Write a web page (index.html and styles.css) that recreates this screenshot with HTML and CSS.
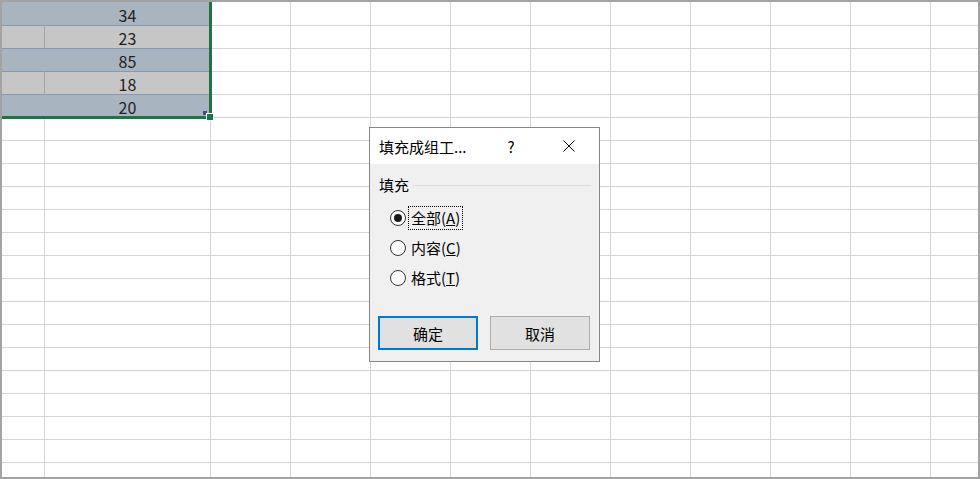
FILE: index.html
```html
<!DOCTYPE html>
<html>
<head>
    <title>填充成组工作表</title>
    <link rel="stylesheet" href="styles.css">
</head>
<body>
    <div class="sheet">
        <div class="row first blue"><div class="cell a"></div><div class="cell b">34</div><div class="rest"></div></div>
        <div class="row gray"><div class="cell a"></div><div class="cell b">23</div><div class="rest"></div></div>
        <div class="row blue"><div class="cell a"></div><div class="cell b">85</div><div class="rest"></div></div>
        <div class="row gray"><div class="cell a"></div><div class="cell b">18</div><div class="rest"></div></div>
        <div class="row blue"><div class="cell a"></div><div class="cell b">20</div><div class="rest"></div></div>
        <div class="row"><div class="cell a"></div><div class="cell b"></div><div class="rest"></div></div>
        <div class="row"><div class="cell a"></div><div class="cell b"></div><div class="rest"></div></div>
        <div class="row"><div class="cell a"></div><div class="cell b"></div><div class="rest"></div></div>
        <div class="row"><div class="cell a"></div><div class="cell b"></div><div class="rest"></div></div>
        <div class="row"><div class="cell a"></div><div class="cell b"></div><div class="rest"></div></div>
        <div class="row"><div class="cell a"></div><div class="cell b"></div><div class="rest"></div></div>
        <div class="row"><div class="cell a"></div><div class="cell b"></div><div class="rest"></div></div>
        <div class="row"><div class="cell a"></div><div class="cell b"></div><div class="rest"></div></div>
        <div class="row"><div class="cell a"></div><div class="cell b"></div><div class="rest"></div></div>
        <div class="row"><div class="cell a"></div><div class="cell b"></div><div class="rest"></div></div>
        <div class="row"><div class="cell a"></div><div class="cell b"></div><div class="rest"></div></div>
        <div class="row"><div class="cell a"></div><div class="cell b"></div><div class="rest"></div></div>
        <div class="row"><div class="cell a"></div><div class="cell b"></div><div class="rest"></div></div>
        <div class="row"><div class="cell a"></div><div class="cell b"></div><div class="rest"></div></div>
        <div class="row"><div class="cell a"></div><div class="cell b"></div><div class="rest"></div></div>
        <div class="row"><div class="cell a"></div><div class="cell b"></div><div class="rest"></div></div>

        <!-- selection outline + fill handle -->
        <div class="selection"></div>
        <div class="corner"></div>
        <div class="handle"></div>

        <div class="dialog">
            <div class="titlebar">
                <div class="title">填充成组工...</div>
                <div class="help">?</div>
                <div class="close">
                    <svg width="12" height="12" viewBox="0 0 12 12">
                        <path d="M0.5 0.5 L11.5 11.5 M11.5 0.5 L0.5 11.5" stroke="#000" stroke-width="1" fill="none"/>
                    </svg>
                </div>
            </div>
            <div class="dialog-body">
                <div class="group">
                    <span>填充</span>
                    <div class="group-line"></div>
                </div>
                <div class="options">
                    <div class="option"><span class="radio on"></span><span class="label focus">全部(<u>A</u>)</span></div>
                    <div class="option"><span class="radio"></span><span class="label">内容(<u>C</u>)</span></div>
                    <div class="option"><span class="radio"></span><span class="label">格式(<u>T</u>)</span></div>
                </div>
                <div class="buttons">
                    <button class="btn default">确定</button>
                    <button class="btn">取消</button>
                </div>
            </div>
        </div>
    </div>
</body>
</html>
```

FILE: styles.css
```css
body {
    margin: 0;
    background: #fff;
}
.sheet {
    position: relative;
    width: 980px;
    height: 479px;
    box-sizing: border-box;
    border: 2px solid #a3a3a3;
    overflow: hidden;
    display: flex;
    flex-direction: column;
    background: #fff;
    font-family: "Noto Sans CJK SC", sans-serif;
}
.row {
    display: flex;
    height: 23px;
    flex-shrink: 0;
}
.row.first {
    height: 24px;
}
.cell {
    box-sizing: border-box;
    height: 100%;
    border-right: 1px solid #d4d4d4;
    border-bottom: 1px solid #d4d4d4;
}
.a {
    width: 43px;
}
.b {
    width: 166px;
    text-align: center;
    font-size: 16px;
    line-height: 24px;
    color: #222;
}
.row.first .b {
    line-height: 26px;
}
.rest {
    flex: 1;
    box-sizing: border-box;
    height: 100%;
    border-bottom: 1px solid #d4d4d4;
    background: repeating-linear-gradient(to right, transparent 0 79px, #d4d4d4 79px 80px);
}
.row.blue .cell {
    background: #a9b4c1;
    border-bottom-color: #8799b1;
}
.row.blue .a {
    border-right-color: #a9b4c1;
}
.row.gray .cell {
    background: #c6c6c6;
    border-bottom-color: #8799b1;
}
.row.gray .a {
    border-right-color: #a5a5a5;
}
.selection {
    position: absolute;
    left: 0;
    top: 0;
    width: 210px;
    height: 117px;
    box-sizing: border-box;
    border-right: 3px solid #217346;
    border-bottom: 3px solid #217346;
}
.corner {
    position: absolute;
    left: 201px;
    top: 109px;
    width: 4px;
    height: 4px;
    background: #3d4f85;
}
.handle {
    position: absolute;
    left: 204px;
    top: 111px;
    width: 6px;
    height: 6px;
    background: #217346;
    border: 1px solid #fff;
}

/* dialog */
.dialog {
    position: absolute;
    left: 367px;
    top: 125px;
    width: 231px;
    height: 235px;
    box-sizing: border-box;
    border: 1px solid #868686;
    background: #f0f0f0;
    font-size: 15px;
    color: #000;
    display: flex;
    flex-direction: column;
}
.titlebar {
    height: 36px;
    flex-shrink: 0;
    background: #fff;
    display: flex;
    align-items: center;
    padding-left: 9px;
}
.title {
    flex: 1;
    white-space: nowrap;
}
.help {
    width: 46px;
    margin-right: 12px;
    text-align: center;
}
.close {
    width: 46px;
    margin-right: 7px;
    display: flex;
    justify-content: center;
}
.dialog-body {
    flex: 1;
    padding: 11px 8px 0 9px;
}
.group {
    display: flex;
    align-items: center;
    line-height: 20px;
}
.group-line {
    flex: 1;
    height: 1px;
    background: #dcdcdc;
    margin-left: 4px;
}
.options {
    margin-top: 8px;
    padding-left: 11px;
}
.option {
    display: flex;
    align-items: center;
    height: 30px;
}
.radio {
    width: 16px;
    height: 16px;
    box-sizing: border-box;
    border: 1px solid #333;
    border-radius: 50%;
    background: #fff;
    display: flex;
    align-items: center;
    justify-content: center;
    margin-right: 2px;
}
.radio.on::after {
    content: "";
    width: 8px;
    height: 8px;
    border-radius: 50%;
    background: #1a1a1a;
}
.label {
    line-height: 20px;
    padding: 1px 2px;
    border: 1px dotted transparent;
}
.label.focus {
    border-color: #000;
}
.buttons {
    display: flex;
    gap: 12px;
    margin-top: 23px;
    margin-left: -1px;
}
.btn {
    width: 100px;
    height: 34px;
    box-sizing: border-box;
    border: 1px solid #adadad;
    background: #e1e1e1;
    font-family: "Noto Sans CJK SC", sans-serif;
    font-size: 15px;
    color: #000;
    padding: 0;
}
.btn.default {
    border: 2px solid #0078d7;
}
```
